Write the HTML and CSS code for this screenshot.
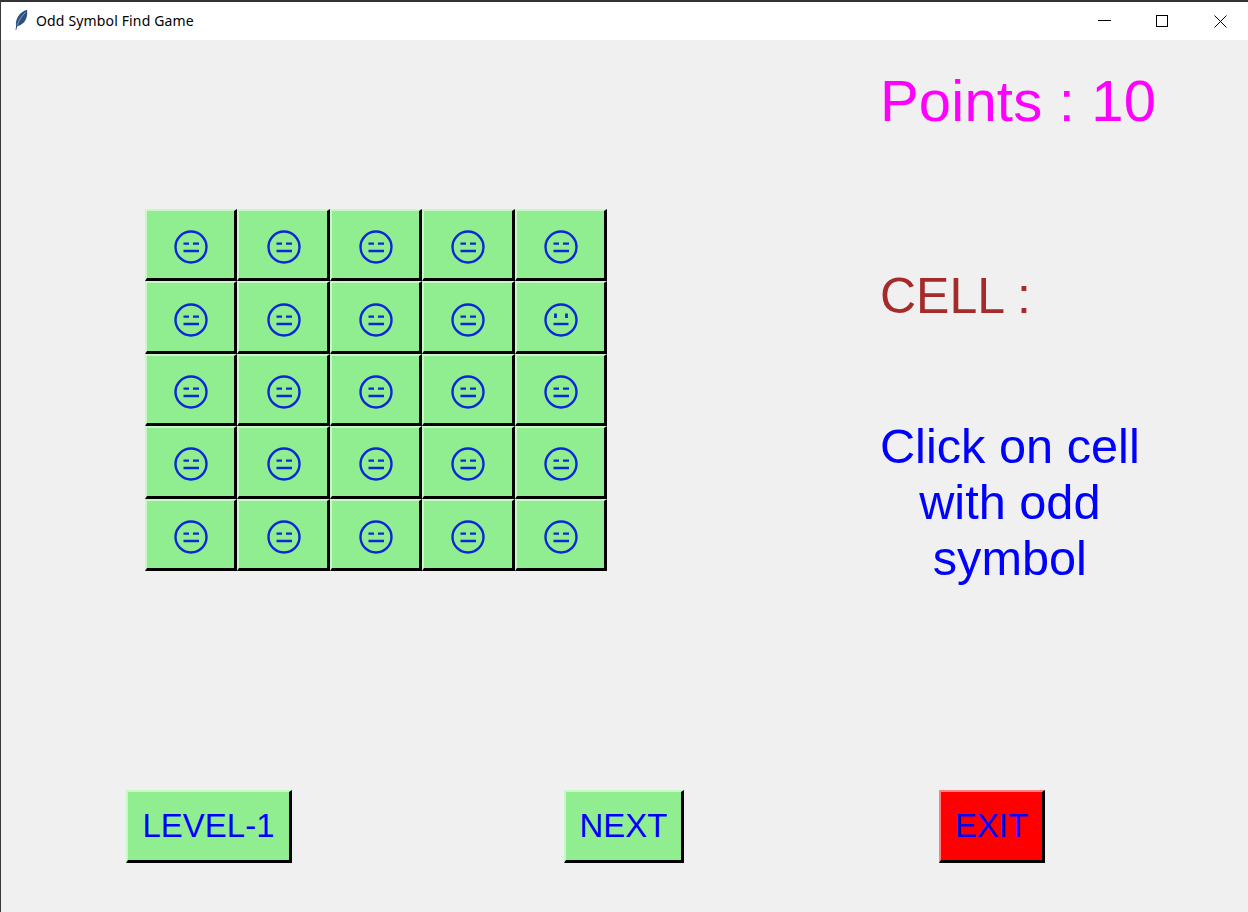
FILE: index.html
```html
<!DOCTYPE html>
<html lang="en">
<head>
  <meta charset="UTF-8" />
  <title>Odd Symbol Find Game</title>
  <link rel="stylesheet" href="styles.css">
</head>
<body>
  <svg class="defs" width="0" height="0">
    <symbol id="same" viewBox="0 0 36 36">
      <circle cx="18" cy="18" r="15.500" fill="none" stroke="currentColor" stroke-width="2.400"/>
      <path d="M10.500 14.600h5.500M20 14.600h6M10.500 22h15.500" fill="none" stroke="currentColor" stroke-width="2.400"/>
    </symbol>
    <symbol id="odd" viewBox="0 0 36 36">
      <circle cx="18" cy="18" r="15.500" fill="none" stroke="currentColor" stroke-width="2.400"/>
      <path d="M12.500 11.500v4.500M23.500 11.500v4.500" fill="none" stroke="currentColor" stroke-width="2.800"/>
      <path d="M10.500 22h15" fill="none" stroke="currentColor" stroke-width="2.400"/>
    </symbol>
  </svg>

  <div class="window">
    <header class="titlebar">
      <svg class="feather" width="16" height="22" viewBox="0 0 16 22">
        <path d="M2.500 20.800C3 19 3 18 3 16.500 2.200 10.500 6.500 2.800 14 .8 15 7 12.800 13.500 7.500 16 6 16.800 5 17 4.300 17.300 4 18.500 3.600 19.800 3.200 21z" fill="#2f4f7f"/>
        <path d="M4.200 16C5.800 11.500 8.500 7 12.500 3.500" fill="none" stroke="#9fb6d4" stroke-width="0.800"/>
      </svg>
      <span class="title">Odd Symbol Find Game</span>
      <div class="controls">
        <svg width="58" height="40" viewBox="0 0 58 40"><path d="M23 20.500h13" stroke="#000" fill="none"/></svg>
        <svg width="58" height="40" viewBox="0 0 58 40"><rect x="23.500" y="15.500" width="11" height="11" stroke="#000" fill="none"/></svg>
        <svg width="58" height="40" viewBox="0 0 58 40"><path d="M23.500 15.500l12 12M35.500 15.500l-12 12" stroke="#000" fill="none"/></svg>
      </div>
    </header>

    <main class="game">
      <div class="top">
        <div class="board">
          <button class="cell"><svg class="face"><use href="#same"/></svg></button>
          <button class="cell"><svg class="face"><use href="#same"/></svg></button>
          <button class="cell"><svg class="face"><use href="#same"/></svg></button>
          <button class="cell"><svg class="face"><use href="#same"/></svg></button>
          <button class="cell"><svg class="face"><use href="#same"/></svg></button>

          <button class="cell"><svg class="face"><use href="#same"/></svg></button>
          <button class="cell"><svg class="face"><use href="#same"/></svg></button>
          <button class="cell"><svg class="face"><use href="#same"/></svg></button>
          <button class="cell"><svg class="face"><use href="#same"/></svg></button>
          <button class="cell"><svg class="face"><use href="#odd"/></svg></button>

          <button class="cell"><svg class="face"><use href="#same"/></svg></button>
          <button class="cell"><svg class="face"><use href="#same"/></svg></button>
          <button class="cell"><svg class="face"><use href="#same"/></svg></button>
          <button class="cell"><svg class="face"><use href="#same"/></svg></button>
          <button class="cell"><svg class="face"><use href="#same"/></svg></button>

          <button class="cell"><svg class="face"><use href="#same"/></svg></button>
          <button class="cell"><svg class="face"><use href="#same"/></svg></button>
          <button class="cell"><svg class="face"><use href="#same"/></svg></button>
          <button class="cell"><svg class="face"><use href="#same"/></svg></button>
          <button class="cell"><svg class="face"><use href="#same"/></svg></button>

          <button class="cell"><svg class="face"><use href="#same"/></svg></button>
          <button class="cell"><svg class="face"><use href="#same"/></svg></button>
          <button class="cell"><svg class="face"><use href="#same"/></svg></button>
          <button class="cell"><svg class="face"><use href="#same"/></svg></button>
          <button class="cell"><svg class="face"><use href="#same"/></svg></button>
        </div>

        <aside class="side">
          <div class="points">Points : 10</div>
          <div class="cell-label">CELL :</div>
          <div class="hint">Click on cell<br>with odd<br>symbol</div>
        </aside>
      </div>

      <div class="actions">
        <button class="btn btn-level">LEVEL-1</button>
        <button class="btn btn-next">NEXT</button>
        <button class="btn btn-exit">EXIT</button>
      </div>
    </main>
  </div>
</body>
</html>
```

FILE: styles.css
```css
* {
  box-sizing: border-box;
}
html, body {
  margin: 0;
  height: 100%;
  overflow: hidden;
}
body {
  font-family: "Liberation Sans", Arial, sans-serif;
  background: #f0f0f0;
}
.defs {
  display: block;
  height: 0;
}
.window {
  display: flex;
  flex-direction: column;
  height: 912px;
  border-left: 1px solid #3a3a3a;
  background: #f0f0f0;
}
.titlebar {
  display: flex;
  align-items: center;
  height: 40px;
  padding-left: 12px;
  background: #fff;
  border-top: 2px solid #333;
}
.feather {
  margin-top: -2px;
  margin-right: 7px;
}
.title {
  margin-top: -2px;
  font-family: "Noto Sans", sans-serif;
  font-size: 14px;
  letter-spacing: 0.150px;
  color: #000;
}
.controls {
  display: flex;
  margin-left: auto;
  margin-top: -2px;
  margin-right: -1px;
}
.controls svg {
  display: block;
}
.game {
  flex: 1;
  display: flex;
  flex-direction: column;
  padding-left: 144px;
}
.top {
  display: flex;
  height: 750px;
}
.board {
  display: grid;
  grid-template-columns: repeat(5, 92.400px);
  grid-template-rows: repeat(5, 72.400px);
  align-self: flex-start;
  margin-top: 169px;
}
.cell, .btn {
  margin: 0;
  padding: 0;
  background: #90ee90;
  border-style: solid;
  border-width: 2px 3px 3px 2px;
  border-color: #c8f7c8 #000 #000 #c8f7c8;
  color: #0000ff;
  font-family: inherit;
}
.cell {
  display: flex;
  align-items: center;
  justify-content: center;
  padding-top: 5px;
  padding-left: 1px;
  color: #0a28d8;
}
.face {
  width: 36px;
  height: 36px;
}
.side {
  display: flex;
  flex-direction: column;
  align-items: flex-start;
  margin-left: 273px;
}
.points {
  margin-top: 28px;
  font-size: 58px;
  letter-spacing: 0.200px;
  line-height: 66px;
  color: #ff00ff;
}
.cell-label {
  margin-top: 135px;
  font-size: 50px;
  line-height: 54px;
  color: #a52a2a;
}
.hint {
  margin-top: 95px;
  font-size: 48.700px;
  line-height: 56px;
  text-align: center;
  color: #0000ff;
}
.actions {
  display: flex;
  margin-left: -19px;
}
.btn {
  height: 73px;
  font-size: 33px;
}
.btn-level {
  width: 166px;
}
.btn-next {
  width: 120px;
  margin-left: 272px;
}
.btn-exit {
  width: 106px;
  margin-left: 255px;
  background: #ff0000;
  border-color: #ff8080 #000 #000 #ff8080;
}
```
